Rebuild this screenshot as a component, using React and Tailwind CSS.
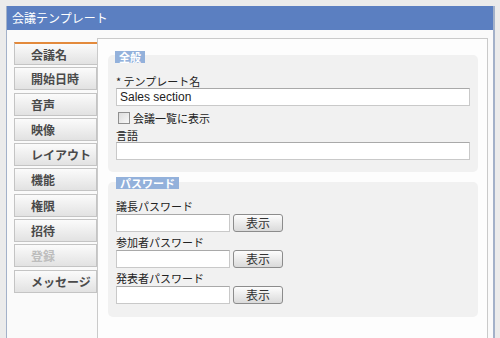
import React from 'react';

const tabs = ['会議名', '開始日時', '音声', '映像', 'レイアウト', '機能', '権限', '招待', '登録', 'メッセージ'];

const jp = { fontFamily: '"Noto Sans CJK JP", "Noto Sans", sans-serif' };

const Legend = ({ children, className = '' }) => (
    <div className={`block w-fit bg-[#93b1db] text-white text-[11px] font-bold leading-[12px] h-[12px] px-[4px] ${className}`}>{children}</div>
);

const TextBox = ({ value = '', className = '' }) => (
    <div className={`h-[18px] bg-white border border-[#c9c9c9] border-t-[#a9a9a9] flex items-center px-[3px] text-[12px] text-[#222] ${className}`} style={{ fontFamily: '"Liberation Sans", Arial, sans-serif' }}>
        {value}
    </div>
);

const PasswordRow = ({ label }) => (
    <>
        <div className="h-[18px] pt-[3px] leading-[15px] text-[11px] text-[#222]">{label}</div>
        <div className="flex items-center gap-[3px]">
            <TextBox className="w-[114px]" />
            <button className="w-[50px] h-[18px] rounded-[3px] border border-[#8c8c8c] bg-gradient-to-b from-[#fdfdfd] to-[#dadada] text-[12px] leading-[16px] text-[#333]">表示</button>
        </div>
    </>
);

export default function App() {
    return (
        <div className="w-[500px] h-[338px] bg-[#ebebeb] pt-[6px] pl-[6px] pr-[5px] overflow-hidden" style={jp}>
            <div className="h-full flex flex-col border-l border-r-2 border-[#a3b1c9] bg-[#fafafa]">
                <div className="h-[24px] bg-[#5b7fc1] text-white text-[12px] leading-[24px] px-[5px] shrink-0">会議テンプレート</div>
                <div className="flex flex-1 pt-[8px] pl-[7px] pr-[5px]">
                    <div className="w-[83px] pt-[4px] flex flex-col gap-[2.3px] shrink-0">
                        {tabs.map((t, i) => (
                            <div
                                key={t}
                                className={`h-[23px] border border-[#c4c4c4] bg-gradient-to-b from-[#fbfbfb] to-[#e2e2e2] pl-[16px] text-[12px] font-bold leading-[21px] ${i === 0 ? 'border-t-2 border-t-[#e38a3c] border-r-0' : ''} ${t === '登録' ? 'text-[#bdbdbd]' : 'text-[#4a4a4a]'}`}
                            >
                                {t}
                            </div>
                        ))}
                    </div>
                    <div className="flex-1 border border-b-0 border-[#cacaca] bg-[#fdfdfd] pl-[10px] pr-[9px]">
                        <div className="flow-root mt-[16px] bg-[#f1f1f1] rounded-[5px] pl-[8px] pr-[8px] pb-[12px]">
                            <Legend className="-mt-[4px] ml-[-1px]">全般</Legend>
                            <div className="mt-[11px] h-[14px] leading-[14px] text-[11px] text-[#222]">* テンプレート名</div>
                            <TextBox value="Sales section" />
                            <div className="mt-[2px] h-[20px] flex items-center gap-[3px] text-[11px] text-[#222]">
                                <span className="ml-[2px] w-[12px] h-[12px] border border-[#8f8f8f] bg-gradient-to-br from-[#dcdcdc] to-[#f8f8f8]" />
                                <span>会議一覧に表示</span>
                            </div>
                            <div className="h-[14px] leading-[14px] text-[11px] text-[#222]">言語</div>
                            <TextBox />
                        </div>
                        <div className="flow-root mt-[10px] bg-[#f1f1f1] rounded-[5px] pl-[8px] pr-[8px] pb-[13px]">
                            <Legend className="-mt-[5px]">パスワード</Legend>
                            <div className="h-[7px]" />
                            <PasswordRow label="議長パスワード" />
                            <PasswordRow label="参加者パスワード" />
                            <PasswordRow label="発表者パスワード" />
                        </div>
                    </div>
                </div>
            </div>
        </div>
    );
}
